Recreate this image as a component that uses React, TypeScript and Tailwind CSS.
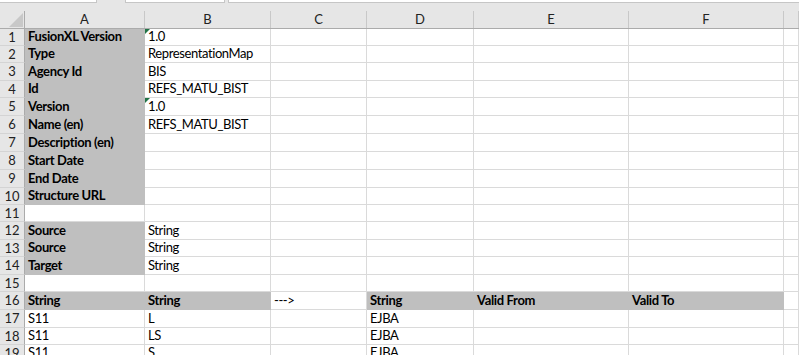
import React from "react";

type Cell = {
  t?: string;
  b?: boolean;
  fill?: boolean;
  tri?: boolean;
};

const GRID =
  "grid grid-cols-[25px_120px_126px_96px_107px_155px_155px_1fr]";

const LETTERS = ["A", "B", "C", "D", "E", "F", ""];

// row heights in px, border included
const HEIGHTS = [17, 17, 18, 17, 18, 18, 18, 18, 18, 17, 17, 18, 17, 18, 17, 18, 18, 17, 17];

const H: Record<number, string> = {
  17: "h-[17px]",
  18: "h-[18px]",
};

const g = (t: string): Cell => ({ t, b: true, fill: true });

const ROWS: Cell[][] = [
  [g("FusionXL Version"), { t: "1.0", tri: true }],
  [g("Type"), { t: "RepresentationMap" }],
  [g("Agency Id"), { t: "BIS" }],
  [g("Id"), { t: "REFS_MATU_BIST" }],
  [g("Version"), { t: "1.0", tri: true }],
  [g("Name (en)"), { t: "REFS_MATU_BIST" }],
  [g("Description (en)"), {}],
  [g("Start Date"), {}],
  [g("End Date"), {}],
  [g("Structure URL"), {}],
  [{}, {}],
  [g("Source"), { t: "String" }],
  [g("Source"), { t: "String" }],
  [g("Target"), { t: "String" }],
  [{}, {}],
  [g("String"), g("String"), { t: "--->" }, g("String"), g("Valid From"), g("Valid To")],
  [{ t: "S11" }, { t: "L" }, {}, { t: "EJBA" }],
  [{ t: "S11" }, { t: "LS" }, {}, { t: "EJBA" }],
  [{ t: "S11" }, { t: "S" }, {}, { t: "EJBA" }],
];

function DataCell({ c }: { c: Cell }) {
  return (
    <div
      className={
        "relative flex items-end overflow-hidden whitespace-nowrap border-b border-r px-[3px] pb-[2px] text-[13px] leading-[13px] text-black " +
        (c.fill ? "border-[#bfbfbf] bg-[#bfbfbf] " : "border-[#dadada] bg-white ") +
        (c.b ? "font-bold tracking-[-0.35px]" : "font-normal tracking-[-0.4px]")
      }
    >
      {c.tri && (
        <svg className="absolute left-0 top-0" width="5" height="5" viewBox="0 0 5 5">
          <polygon points="0,0 5,0 0,5" fill="#217346" />
        </svg>
      )}
      {c.t}
    </div>
  );
}

export default function App() {
  return (
    <div
      className="h-[355px] w-[799px] overflow-hidden bg-white"
      style={{ fontFamily: "Lato, 'Open Sans', sans-serif" }}
    >
      {/* strip under the name box and formula bar */}
      <div className="flex h-[3px] bg-[#e6e6e6]">
        <div className="w-[97px] border-b border-r border-[#c6c6c6] bg-white" />
        <div className="ml-[28px] w-[100px] border-b border-l border-r border-[#c6c6c6] bg-white" />
        <div className="ml-[3px] flex-1 border-b border-l border-[#c6c6c6] bg-white" />
      </div>

      {/* column headers */}
      <div className={GRID + " h-[26px] border-b border-[#ababab] bg-[#e6e6e6] pt-[8px]"}>
        <div className="relative border-r border-[#ababab]">
          <svg className="absolute bottom-[1px] right-[1px]" width="14" height="14" viewBox="0 0 14 14">
            <polygon points="14,0 14,14 0,14" fill="#c8c8c8" />
          </svg>
        </div>
        {LETTERS.map((l, i) => (
          <div
            key={i}
            className="flex items-center justify-center border-r border-[#c8c8c8] text-[13px] leading-none text-[#222]"
          >
            {l}
          </div>
        ))}
      </div>

      {/* sheet rows */}
      {ROWS.map((row, r) => {
        const cells: Cell[] = [...row];
        while (cells.length < 7) cells.push({});
        return (
          <div key={r} className={GRID + " " + H[HEIGHTS[r]]}>
            <div className="flex items-center justify-center border-b border-r border-b-[#d4d4d4] border-r-[#ababab] bg-[#e6e6e6] text-[13px] leading-none text-[#222]">
              {r + 1}
            </div>
            {cells.map((c, i) => (
              <DataCell key={i} c={c} />
            ))}
          </div>
        );
      })}
    </div>
  );
}
